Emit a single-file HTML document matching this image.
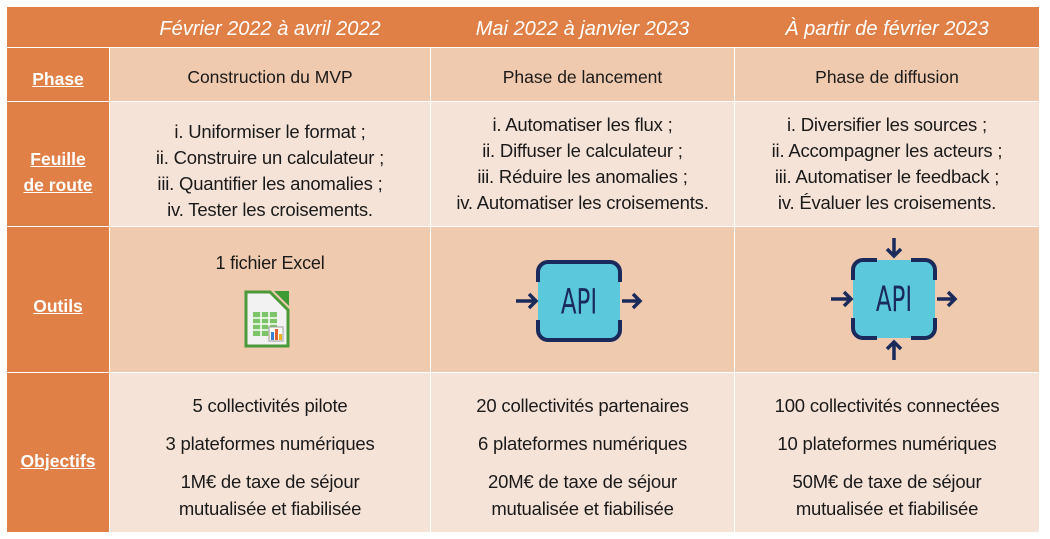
<!DOCTYPE html>
<html><head><meta charset="utf-8"><style>
*{margin:0;padding:0;box-sizing:border-box}
body{width:1050px;height:539px;background:#fff;position:relative;font-family:"Liberation Sans",sans-serif;color:#1a1a1a;overflow:hidden}
.c{position:absolute;display:flex;flex-direction:column;align-items:center;justify-content:center;text-align:center;white-space:nowrap}
.h{background:#E08046;color:#fff;font-style:italic;font-size:20px}
.l{background:#E08046;color:#fff;font-weight:bold;font-size:17.5px;text-decoration:underline;line-height:26px}
.a{background:#F0CAAE}
.b{background:#F6E3D7}
.t{font-size:18.5px;line-height:26px;letter-spacing:-0.2px}
.o{font-size:18.5px;line-height:27px;letter-spacing:-0.2px}
</style></head><body>
<div class="c h" style="left:7px;top:7px;width:1032px;height:40px"></div>
<div class="c h" style="left:110px;top:7px;width:320px;height:40px;padding-top:4px">Février 2022 à avril 2022</div>
<div class="c h" style="left:431px;top:7px;width:303px;height:40px;padding-top:4px">Mai 2022 à janvier 2023</div>
<div class="c h" style="left:735px;top:7px;width:304px;height:40px;padding-top:4px">À partir de février 2023</div>

<div class="c l" style="left:7px;top:48px;width:102px;height:53px;padding-top:8px">Phase</div>
<div class="c a" style="left:110px;top:48px;width:320px;height:53px;font-size:17.5px;padding-top:6px">Construction du MVP</div>
<div class="c a" style="left:431px;top:48px;width:303px;height:53px;font-size:17.5px;padding-top:6px">Phase de lancement</div>
<div class="c a" style="left:735px;top:48px;width:304px;height:53px;font-size:17.5px;padding-top:6px">Phase de diffusion</div>

<div class="c l" style="left:7px;top:102px;width:102px;height:124px;padding-top:16px">Feuille<br>de route</div>
<div class="c b t" style="left:110px;top:102px;width:320px;height:124px;padding-top:14px">i. Uniformiser le format ;<br>ii. Construire un calculateur ;<br>iii. Quantifier les anomalies ;<br>iv. Tester les croisements.</div>
<div class="c b t" style="left:431px;top:102px;width:303px;height:124px;padding-bottom:0px">i. Automatiser les flux ;<br>ii. Diffuser le calculateur ;<br>iii. Réduire les anomalies ;<br>iv. Automatiser les croisements.</div>
<div class="c b t" style="left:735px;top:102px;width:304px;height:124px;padding-bottom:0px">i. Diversifier les sources ;<br>ii. Accompagner les acteurs ;<br>iii. Automatiser le feedback ;<br>iv. Évaluer les croisements.</div>

<div class="c l" style="left:7px;top:227px;width:102px;height:145px;padding-top:12px">Outils</div>
<div class="c a" style="left:110px;top:227px;width:320px;height:145px;justify-content:flex-start">
 <div style="font-size:18px;margin-top:26px;letter-spacing:-0.2px">1 fichier Excel</div>
 <svg width="50" height="60" viewBox="0 0 50 60" style="margin-top:16px;margin-left:-6px">
  <path d="M4 2 H28 L46 20 V56 H4 Z" fill="#f2f2f2" stroke="#4a9a3a" stroke-width="3"/>
  <path d="M32 1 H47 V16 Z" fill="#3d9b35"/>
  <rect x="11" y="22" width="24" height="24" fill="#7cc36a"/>
  <g stroke="#fff" stroke-width="1.5"><path d="M11 28H35M11 34H35M11 40H35M19 22V46M27 22V46"/></g>
  <rect x="27" y="37" width="14" height="14" fill="#fff" stroke="#999"/>
  <rect x="29" y="42" width="3" height="8" fill="#3a7fd5"/><rect x="33" y="39" width="3" height="11" fill="#e0602a"/><rect x="37" y="44" width="3" height="6" fill="#f0b020"/>
 </svg>
</div>
<div class="c a" style="left:431px;top:227px;width:303px;height:145px"></div>
<div class="c a" style="left:735px;top:227px;width:304px;height:145px"></div>
<svg style="position:absolute;left:510px;top:256px" width="140" height="90" viewBox="0 0 140 90">
 <rect x="28" y="6" width="82" height="78" rx="10" fill="#5BC8DC"/>
 <path d="M28 26V16a10 10 0 0 1 10-10H100a10 10 0 0 1 10 10V26M110 64V74a10 10 0 0 1-10 10H38a10 10 0 0 1-10-10V64" fill="none" stroke="#1a2a5a" stroke-width="4"/>
 <path d="M6 45H26M19 38L26 45L19 52M112 45H130M123 38L130 45L123 52" fill="none" stroke="#1a2a5a" stroke-width="3.5"/>
 <text x="69" y="57" text-anchor="middle" font-family="DejaVu Sans Condensed,sans-serif" font-size="30" fill="#1a2a5a" transform="translate(69 0) scale(0.85 1.15) translate(-69 -7)">API</text>
</svg>
<svg style="position:absolute;left:825px;top:234px" width="140" height="130" viewBox="0 0 140 130">
 <rect x="28" y="26" width="82" height="78" rx="10" fill="#5BC8DC"/>
 <path d="M28 46V36a10 10 0 0 1 10-10H52M86 26H100a10 10 0 0 1 10 10V46M110 84V94a10 10 0 0 1-10 10H86M52 104H38a10 10 0 0 1-10-10V84" fill="none" stroke="#1a2a5a" stroke-width="4"/>
 <path d="M6 65H26M19 58L26 65L19 72M112 65H130M123 58L130 65L123 72M69 4V22M62 15L69 22L76 15M69 126V108M62 115L69 108L76 115" fill="none" stroke="#1a2a5a" stroke-width="3.5"/>
 <text x="69" y="77" text-anchor="middle" font-family="DejaVu Sans Condensed,sans-serif" font-size="30" fill="#1a2a5a" transform="translate(69 0) scale(0.85 1.15) translate(-69 -10)">API</text>
</svg>

<div class="c l" style="left:7px;top:373px;width:102px;height:159px;padding-top:16px">Objectifs</div>
<div class="c b o" style="left:110px;top:373px;width:320px;height:159px;padding-top:8px"><div>5 collectivités pilote</div><div style="margin-top:11px">3 plateformes numériques</div><div style="margin-top:11px">1M€ de taxe de séjour<br>mutualisée et fiabilisée</div></div>
<div class="c b o" style="left:431px;top:373px;width:303px;height:159px;padding-top:8px"><div>20 collectivités partenaires</div><div style="margin-top:11px">6 plateformes numériques</div><div style="margin-top:11px">20M€ de taxe de séjour<br>mutualisée et fiabilisée</div></div>
<div class="c b o" style="left:735px;top:373px;width:304px;height:159px;padding-top:8px"><div>100 collectivités connectées</div><div style="margin-top:11px">10 plateformes numériques</div><div style="margin-top:11px">50M€ de taxe de séjour<br>mutualisée et fiabilisée</div></div>
</body></html>
